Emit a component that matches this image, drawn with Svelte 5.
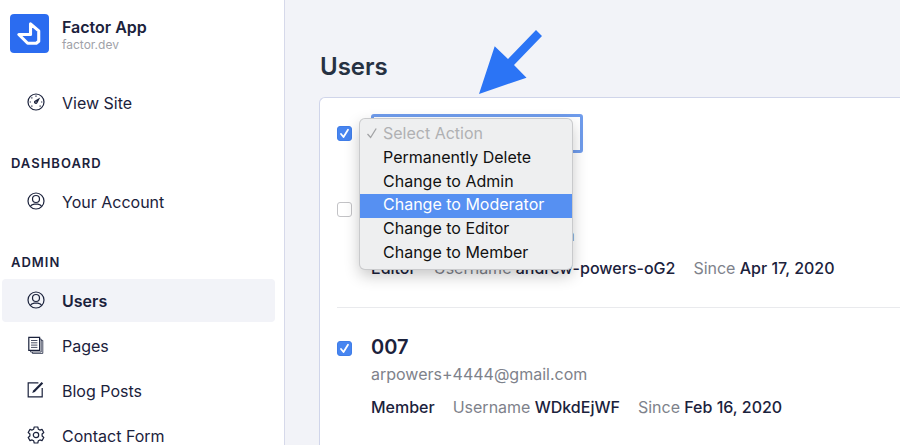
<script>
  const groups = [
    { title: '', items: [{ label: 'View Site', icon: 'gauge' }] },
    { title: 'Dashboard', items: [{ label: 'Your Account', icon: 'user' }] },
    {
      title: 'Admin',
      items: [
        { label: 'Users', icon: 'user', active: true },
        { label: 'Pages', icon: 'pages' },
        { label: 'Blog Posts', icon: 'edit' },
        { label: 'Contact Form', icon: 'gear' }
      ]
    }
  ];

  const actions = [
    'Select Action',
    'Permanently Delete',
    'Change to Admin',
    'Change to Moderator',
    'Change to Editor',
    'Change to Member'
  ];

  let highlighted = $state(3);
  let allSelected = $state(true);

  let users = $state([
    {
      name: 'Andrew Powers',
      email: 'arpowers+222@gmail.com',
      role: 'Editor',
      username: 'andrew-powers-oG2',
      since: 'Apr 17, 2020',
      selected: false
    },
    {
      name: '007',
      email: 'arpowers+4444@gmail.com',
      role: 'Member',
      username: 'WDkdEjWF',
      since: 'Feb 16, 2020',
      selected: true
    }
  ]);
</script>

{#snippet icon(name)}
  <svg class="icon" viewBox="0 0 18 18" aria-hidden="true">
    {#if name === 'gauge'}
      <circle cx="9" cy="9" r="8" />
      <path d="M9 2.6v1.2M4.5 4.5l.8.8M2.7 9h1.2M14.1 9h1.2M4.5 13.5l.8-.8M13.5 13.5l-.8-.8" />
      <path class="solid" d="M13.2 4.6 10.7 9.6A1.9 1.9 0 1 1 8.1 7.4Z" />
      <circle class="hole" cx="9" cy="9" r=".6" />
    {:else if name === 'user'}
      <circle cx="9" cy="9" r="8" />
      <circle cx="9" cy="7" r="3.5" />
      <path d="M3.3 14.4c.8-1.6 2.3-1.9 3.9-2.2h3.6c1.6.3 3.1.6 3.9 2.2" />
    {:else if name === 'pages'}
      <path d="M1.8 1.4h10.8v13H1.8z" />
      <path class="thin" d="M12.6 3h1.6v13H3.6v-1.6M14.2 4.4h1.6v13H5.4V16" />
      <path class="thin" d="M4 4.5h6.4M4 6.8h6.4M4 9.1h6.4M4 11.4h6.4" />
    {:else if name === 'edit'}
      <path d="M11.4 1.8H1.2v14h14V7" />
      <path class="solid" d="m5.2 12.1 1-2.7L14.6 1l1.6 1.6-8.4 8.5z" />
    {:else}
      <path
        stroke-linejoin="round"
        d="M7.2 1h3.6l.5 2.2 1.6.9 2.1-.7 1.8 3.1L15.1 8v2l1.7 1.5-1.8 3.1-2.1-.7-1.6.9-.5 2.2H7.2l-.5-2.2-1.6-.9-2.1.7-1.8-3.1L2.9 10V8L1.2 6.5 3 3.4l2.1.7 1.6-.9z"
      />
      <circle cx="9" cy="9" r="2.7" />
    {/if}
  </svg>
{/snippet}

<div class="shell">
  <aside class="sidebar">
    <a class="brand" href="#home">
      <svg class="logo" viewBox="0 0 38 38" aria-hidden="true">
        <rect width="38" height="38" rx="4" />
        <path d="M8.6 20H20V9.6l8 6.9v10l-2.4 2h-8.4z" />
      </svg>
      <span class="brand-text">
        <strong>Factor App</strong>
        <small>factor.dev</small>
      </span>
    </a>

    <nav>
      {#each groups as group}
        <section class="group">
          {#if group.title}<h2>{group.title}</h2>{/if}
          <div class="links">
            {#each group.items as item}
              <a class="link" class:active={item.active} href="#{item.label}">
                {@render icon(item.icon)}
                <span>{item.label}</span>
              </a>
            {/each}
          </div>
        </section>
      {/each}
    </nav>
  </aside>

  <main>
    <h1>Users</h1>

    <div class="card">
      <div class="toolbar">
        <input type="checkbox" aria-label="Select all users" bind:checked={allSelected} />
        <div class="action">
          <select aria-label="Bulk action">
            {#each actions as action}<option>{action}</option>{/each}
          </select>
          <div class="menu">
            {#each actions as action, i}
              <button
                type="button"
                disabled={i === 0}
                class:highlight={i === highlighted}
                onmouseenter={() => (highlighted = i)}
              >
                <span class="tick">
                  {#if i === 0}
                    <svg viewBox="0 0 12 12" aria-hidden="true"><path d="M1.5 7 4.6 10.5 10.2 1.5" /></svg>
                  {/if}
                </span>
                {action}
              </button>
            {/each}
          </div>
        </div>
      </div>

      {#each users as user}
        <article class="user">
          <input type="checkbox" aria-label="Select {user.name}" bind:checked={user.selected} />
          <div class="details">
            <h3>{user.name}</h3>
            <p class="email">{user.email}</p>
            <p class="meta">
              <span>{user.role}</span>
              <span><em>Username</em> {user.username}</span>
              <span><em>Since</em> {user.since}</span>
            </p>
          </div>
        </article>
      {/each}
    </div>

    <svg class="pointer" viewBox="0 0 63 64" aria-hidden="true">
      <path d="M0 64 15.7 16.3 29 29 57 0l6 6-28 29 12.5 12.7z" />
    </svg>
  </main>
</div>

<style>
  :global(body) {
    margin: 0;
  }

  .shell {
    display: flex;
    height: 100vh;
    overflow: hidden;
    background: #f2f3f8;
    color: #1b223c;
    font-family: Inter, 'Liberation Sans', sans-serif;
    font-size: 16px;
  }

  h1,
  h2,
  h3,
  p {
    margin: 0;
  }

  a {
    color: inherit;
    text-decoration: none;
  }

  .sidebar {
    box-sizing: border-box;
    flex: 0 0 285px;
    border-right: 1px solid #d6d9ea;
    background: #fff;
  }

  .brand {
    display: flex;
    box-sizing: border-box;
    height: 81px;
    padding: 14px 10px 0;
    gap: 13px;
  }

  .logo {
    width: 39px;
    height: 39px;
  }

  .logo rect {
    fill: #2b6cf0;
  }

  .logo path {
    fill: none;
    stroke: #fff;
    stroke-width: 3;
    stroke-linejoin: round;
  }

  .brand-text {
    display: flex;
    flex-direction: column;
    padding-top: 3px;
  }

  .brand-text strong {
    font-weight: 600;
    line-height: 20px;
  }

  .brand-text small {
    color: #a0a2a9;
    font-size: 12px;
    line-height: 15px;
  }

  .group + .group {
    margin-top: 28px;
  }

  h2 {
    margin-bottom: 6px;
    padding-left: 11px;
    font-size: 13px;
    font-weight: 600;
    letter-spacing: 1px;
    line-height: 22px;
    text-transform: uppercase;
  }

  .links {
    display: flex;
    flex-direction: column;
    gap: 2px;
    padding: 0 9px 0 2px;
  }

  .link {
    display: flex;
    align-items: center;
    height: 43px;
    padding-left: 25px;
    gap: 17px;
    border-radius: 4px;
  }

  .link.active {
    background: #f2f3f8;
    font-weight: 600;
  }

  .icon {
    width: 18px;
    height: 18px;
    margin-bottom: 2px;
    fill: none;
    stroke: #1b223c;
    stroke-width: 1.2;
  }

  .icon .solid {
    fill: #1b223c;
    stroke: none;
  }

  .icon .hole {
    fill: #fff;
    stroke: none;
  }

  .icon .thin {
    stroke-width: 0.8;
  }

  main {
    position: relative;
    flex: 1;
    min-width: 0;
    padding: 52px 0 0 34px;
  }

  h1 {
    padding-left: 1px;
    color: #263142;
    font-size: 24px;
    font-weight: 600;
    line-height: 30px;
  }

  .card {
    margin-top: 15px;
    padding: 0 0 24px 17px;
    border: 1px solid #d0d5ea;
    border-width: 1px 0 1px 1px;
    border-radius: 6px 0 0 6px;
    background: #fff;
  }

  .toolbar,
  .user {
    display: flex;
    gap: 19px;
  }

  .toolbar {
    align-items: center;
    padding: 16px 0;
  }

  .user {
    padding: 27px 0;
  }

  .user + .user {
    border-top: 1px solid #e9eaed;
  }

  input {
    flex: none;
    width: 15px;
    height: 15px;
    margin: 0;
    border: 1px solid #c3c3c6;
    border-radius: 3px;
    appearance: none;
    background: #fff;
  }

  input:checked {
    border-color: #3f7de8;
    background: #4785f0
      url("data:image/svg+xml,%3Csvg xmlns='http://www.w3.org/2000/svg' viewBox='0 0 13 13'%3E%3Cpath d='M3 7l2.5 3L10 2.8' fill='none' stroke='white' stroke-width='1.8' stroke-linecap='round' stroke-linejoin='round'/%3E%3C/svg%3E");
  }

  .user input {
    margin-top: 6px;
  }

  .action {
    position: relative;
  }

  select {
    display: block;
    width: 212px;
    height: 39px;
    padding: 0 12px;
    border: 3px solid #6f9cec;
    border-radius: 3px;
    appearance: none;
    background: #fff;
    color: #1b223c;
    font: inherit;
  }

  .menu {
    position: absolute;
    z-index: 1;
    top: 5px;
    left: -11px;
    display: grid;
    grid-template-rows: repeat(6, 1fr);
    box-sizing: border-box;
    width: 212px;
    height: 150px;
    padding: 4px 0;
    border-radius: 5px;
    background: #eeeff0;
    box-shadow:
      0 0 0 1px #c9cacc,
      0 6px 16px rgb(0 0 0 / 24%);
  }

  .menu button {
    display: flex;
    align-items: center;
    padding: 0 0 3px 6px;
    border: 0;
    background: none;
    color: #111;
    font: inherit;
    line-height: 20px;
    text-align: left;
    white-space: nowrap;
  }

  .menu button:disabled {
    color: #b0b1b3;
  }

  .menu button.highlight {
    background: #5690f2;
    color: #fff;
  }

  .tick {
    flex: 0 0 17px;
  }

  .tick svg {
    display: block;
    width: 12px;
    height: 12px;
    fill: none;
    stroke: #a2a3a5;
    stroke-width: 1.3;
  }

  h3 {
    font-size: 20px;
    font-weight: 600;
    line-height: 24px;
  }

  .email,
  .meta {
    line-height: 24px;
    white-space: nowrap;
  }

  .email {
    margin-top: 3px;
    color: #7e828b;
  }

  .meta {
    display: flex;
    margin-top: 9px;
    gap: 18px;
    font-weight: 500;
  }

  em {
    color: #7e828b;
    font-style: normal;
    font-weight: 400;
  }

  .pointer {
    position: absolute;
    top: 30px;
    left: 194px;
    width: 63px;
    height: 64px;
    fill: #2b74f5;
  }
</style>
